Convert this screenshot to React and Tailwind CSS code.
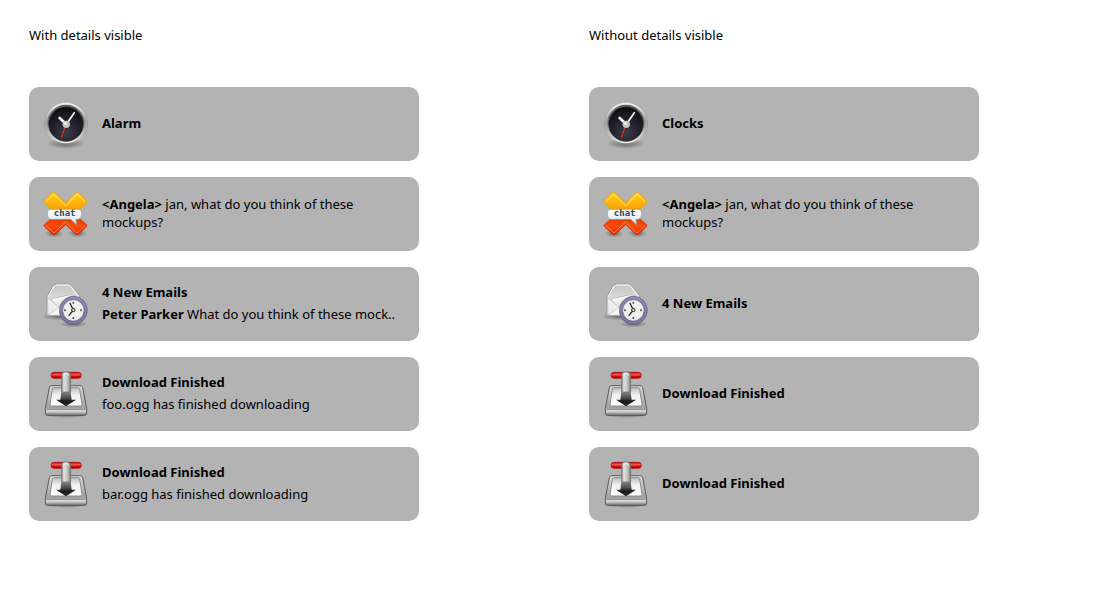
import React from "react";

function Gradient({ id, stops, horizontal }) {
  return (
    <linearGradient id={id} x1="0" y1="0" x2={horizontal ? "1" : "0"} y2={horizontal ? "0" : "1"}>
      {stops.map(([offset, color]) => (
        <stop key={offset} offset={offset} stopColor={color} />
      ))}
    </linearGradient>
  );
}

// Gradients shared by every icon on the page.
function IconDefs() {
  return (
    <svg className="absolute h-0 w-0" aria-hidden="true">
      <defs>
        <Gradient id="rim" stops={[["0", "#f4f4f2"], ["0.45", "#a3a4a0"], ["0.85", "#c4c5c1"], ["1", "#70716d"]]} />
        <Gradient id="rimInner" stops={[["0", "#5c5d5a"], ["0.5", "#8b8c88"], ["1", "#f2f2ef"]]} />
        <radialGradient id="dial" cx="0.5" cy="0.75" r="0.7">
          <stop offset="0" stopColor="#3b3b4a" />
          <stop offset="1" stopColor="#0e0e14" />
        </radialGradient>
        <Gradient id="yellow" stops={[["0", "#ffd21c"], ["1", "#fb9a00"]]} />
        <Gradient id="red" stops={[["0", "#e03a00"], ["0.5", "#fb4a0a"], ["1", "#e62a00"]]} />
        <Gradient id="bubble" stops={[["0", "#ffffff"], ["1", "#d3e2ee"]]} />
        <Gradient id="flap" stops={[["0", "#c6c6c4"], ["1", "#f2f2f0"]]} />
        <Gradient id="paper" stops={[["0", "#ffffff"], ["1", "#d8d8d6"]]} />
        <Gradient id="violet" stops={[["0", "#8785ab"], ["1", "#67658b"]]} />
        <Gradient id="tray" stops={[["0", "#dededc"], ["0.75", "#9fa09c"], ["0.85", "#dededc"], ["1", "#70716d"]]} />
        <Gradient id="well" stops={[["0", "#bdbdbb"], ["0.4", "#f0f0f0"], ["1", "#ffffff"]]} />
        <Gradient id="stem" horizontal stops={[["0", "#858682"], ["0.25", "#e2e2e0"], ["0.65", "#c2c3bf"], ["1", "#747571"]]} />
        <Gradient id="arrow" stops={[["0", "#9b9b99"], ["0.5", "#4b4c4c"], ["0.7", "#17181a"], ["1", "#2c2d2f"]]} />
        <Gradient id="handle" stops={[["0", "#c00000"], ["0.4", "#ff5a5a"], ["0.65", "#e00808"], ["1", "#a00000"]]} />
        <radialGradient id="shade">
          <stop offset="0.2" stopColor="#000" stopOpacity="0.35" />
          <stop offset="1" stopColor="#000" stopOpacity="0" />
        </radialGradient>
      </defs>
    </svg>
  );
}

function Icon({ children }) {
  return (
    <svg viewBox="0 0 180 180" className="size-[60px] shrink-0" aria-hidden="true">
      {children}
    </svg>
  );
}

function ClockIcon() {
  return (
    <Icon>
      <ellipse cx="90" cy="149" rx="58" ry="16" fill="url(#shade)" />
      <circle cx="90" cy="90" r="65" fill="url(#rim)" stroke="#8b8c88" strokeWidth="1" />
      <circle cx="90" cy="90" r="55" fill="none" stroke="url(#rimInner)" strokeWidth="5" />
      <circle cx="90" cy="90" r="52" fill="url(#dial)" stroke="#2b2c31" strokeWidth="2" />
      <path d="M86 100 L76 134" stroke="#e03a16" strokeWidth="4" strokeDasharray="9 2" />
      <path d="M91 91 L71 72" stroke="#fafafa" strokeWidth="8" strokeLinecap="round" />
      <path d="M91 91 L115 56" stroke="#f4f4f4" strokeWidth="5" strokeLinecap="round" />
      <circle cx="91" cy="91" r="11" fill="#c4c4c2" />
      <circle cx="88" cy="88" r="5" fill="#f0f0ee" />
    </Icon>
  );
}

function ChatIcon() {
  return (
    <Icon>
      <ellipse cx="54" cy="148" rx="28" ry="12" fill="url(#shade)" />
      <ellipse cx="124" cy="148" rx="28" ry="12" fill="url(#shade)" />
      <path d="M25 49 L49 26 Q53 23 57 26 L89 56 L119 26 Q123 23 127 26 L152 49 Q154 53 151 56 L124 84 H53 L26 57 Q23 53 25 49Z" fill="url(#yellow)" stroke="#e8960a" strokeWidth="2" />
      <path d="M31 52 L53 31 L89 66 L123 31 L146 52" fill="none" stroke="#ffe77a" strokeWidth="3" />
      <path d="M53 98 H124 L151 121 Q154 125 151 129 L128 151 Q124 155 120 151 L89 122 L58 151 Q54 155 50 151 L26 129 Q23 125 26 121Z" fill="url(#red)" stroke="#c22b00" strokeWidth="2" />
      <path d="M31 126 L54 147 L88 114 L123 147 L146 126" fill="none" stroke="#ff7d52" strokeWidth="3" />
      <path d="M43 76 H128 Q137 77 137 91 Q136 104 128 106 H120 L122 123 L104 106 H43 Q34 104 34 91 Q34 77 43 76Z" fill="url(#bubble)" stroke="#7f9ab2" strokeWidth="2" />
      <text x="86" y="97" textAnchor="middle" fontSize="27" fontWeight="700" fill="#3a434e" fontFamily="'DejaVu Sans Mono', monospace">
        chat
      </text>
    </Icon>
  );
}

function MailIcon() {
  return (
    <Icon>
      <ellipse cx="72" cy="127" rx="56" ry="12" fill="url(#shade)" />
      <ellipse cx="113" cy="150" rx="42" ry="10" fill="url(#shade)" />
      <path d="M33 69 L49 38 Q54 30 64 30 H97 Q104 31 109 37 L131 66 V124 H36 Q33 124 33 120Z" fill="url(#flap)" stroke="#8c8c8a" strokeWidth="2" />
      <path d="M36 69 L52 40 Q56 33 64 33 H97 Q103 34 107 40 L128 68" fill="none" stroke="#fff" strokeWidth="3" />
      <path d="M44 75 L104 62 L126 76 L72 112Z" fill="url(#paper)" stroke="#b2b2b0" strokeWidth="2" />
      <path d="M34 70 L69 100 L36 123Z" fill="#eeeeec" stroke="#b0b0ae" strokeWidth="2" />
      <path d="M36 123 L76 94 L100 124Z" fill="#f6f6f4" stroke="#c2c2c0" strokeWidth="2" />
      <circle cx="112" cy="109" r="42" fill="url(#violet)" stroke="#5f5d84" strokeWidth="2" />
      <circle cx="112" cy="109" r="38" fill="none" stroke="#9c9abd" strokeWidth="2" />
      <circle cx="112" cy="109" r="32" fill="#efefed" stroke="#6d6b90" strokeWidth="2" />
      <g fill="#4a4b4a">
        <circle cx="112" cy="86" r="3" />
        <circle cx="135" cy="109" r="3" />
        <circle cx="112" cy="132" r="3" />
        <circle cx="87" cy="109" r="3" />
      </g>
      <path d="M112 108 L102 88 M112 108 L99 124" fill="none" stroke="#252626" strokeWidth="4" strokeLinecap="round" />
      <circle cx="112" cy="108" r="5" fill="#f1f1ef" stroke="#252626" strokeWidth="3" />
    </Icon>
  );
}

function DownloadIcon() {
  return (
    <Icon>
      <ellipse cx="90" cy="153" rx="66" ry="9" fill="url(#shade)" />
      <path d="M48 65 H132 Q138 65 140 71 L152 133 V147 Q152 154 145 154 H35 Q28 154 28 147 V133 L40 71 Q42 65 48 65Z" fill="url(#tray)" stroke="#5a5b58" strokeWidth="3" />
      <path d="M31 136 H149" stroke="#777874" strokeWidth="2" />
      <path d="M53 71 H127 Q130 71 131 75 L138 121 Q138 126 133 126 H47 Q42 126 42 121 L49 75 Q50 71 53 71Z" fill="url(#well)" stroke="#8a8b88" strokeWidth="3" />
      <path d="M77 76 H103 L107 107 H120 L90 127 L60 107 H73Z" fill="url(#arrow)" />
      <rect x="45" y="25" width="91" height="18" rx="9" fill="url(#handle)" stroke="#a00000" strokeWidth="2" />
      <path d="M77 84 V33 Q77 24 87 24 H94 Q104 24 104 33 V84Z" fill="url(#stem)" stroke="#70716e" strokeWidth="2" />
      <path d="M82 35 Q82 29 90 29 Q98 29 98 35" fill="none" stroke="#f6f6f4" strokeWidth="3" />
    </Icon>
  );
}

function Notification({ icon: IconDrawing, children }) {
  return (
    <li className="flex min-h-[74px] items-center gap-[6px] rounded-[10px] bg-[#b3b3b3] py-[7px] pr-3 pl-[7px]">
      <IconDrawing />
      <div className="min-w-0 pb-[2px]">{children}</div>
    </li>
  );
}

function Titled({ title, children }) {
  return (
    <>
      <h3 className="font-bold">{title}</h3>
      {children && <p className="mt-1 whitespace-nowrap">{children}</p>}
    </>
  );
}

function ChatMessage() {
  return (
    <p className="max-w-[280px]">
      <b>&lt;Angela&gt;</b> jan, what do you think of these mockups?
    </p>
  );
}

function Column({ heading, children }) {
  return (
    <section>
      <h2>{heading}</h2>
      <ul className="mt-[43px] flex max-w-[390px] flex-col gap-4">{children}</ul>
    </section>
  );
}

export default function App() {
  return (
    <main className="grid grid-cols-2 gap-[78px] bg-white px-[29px] pt-[26px] pb-8 font-['Noto_Sans',sans-serif] text-[13px] leading-[18px] text-black">
      <IconDefs />
      <Column heading="With details visible">
        <Notification icon={ClockIcon}>
          <Titled title="Alarm" />
        </Notification>
        <Notification icon={ChatIcon}>
          <ChatMessage />
        </Notification>
        <Notification icon={MailIcon}>
          <Titled title="4 New Emails">
            <b>Peter Parker</b> What do you think of these mock..
          </Titled>
        </Notification>
        <Notification icon={DownloadIcon}>
          <Titled title="Download Finished">foo.ogg has finished downloading</Titled>
        </Notification>
        <Notification icon={DownloadIcon}>
          <Titled title="Download Finished">bar.ogg has finished downloading</Titled>
        </Notification>
      </Column>
      <Column heading="Without details visible">
        <Notification icon={ClockIcon}>
          <Titled title="Clocks" />
        </Notification>
        <Notification icon={ChatIcon}>
          <ChatMessage />
        </Notification>
        <Notification icon={MailIcon}>
          <Titled title="4 New Emails" />
        </Notification>
        <Notification icon={DownloadIcon}>
          <Titled title="Download Finished" />
        </Notification>
        <Notification icon={DownloadIcon}>
          <Titled title="Download Finished" />
        </Notification>
      </Column>
    </main>
  );
}
